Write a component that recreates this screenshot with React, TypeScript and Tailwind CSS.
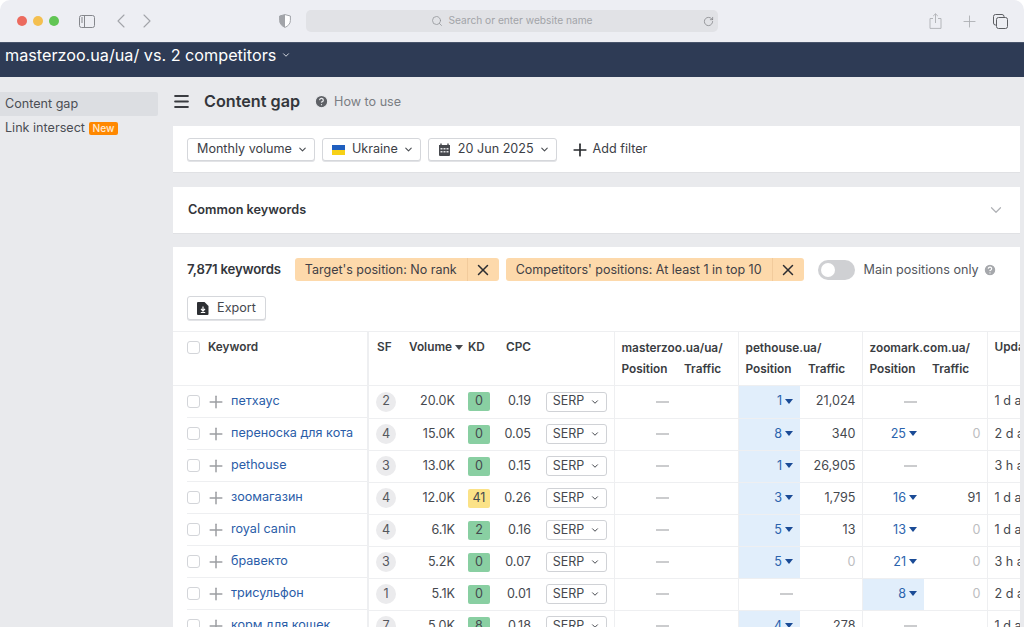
import React from 'react';
import { ChevronDown, ChevronLeft, ChevronRight, Plus, X, Search, RotateCw, Menu, CircleHelp } from 'lucide-react';

type Pos = { v: string; hi?: boolean } | null;
type Row = {
  kw: string; sf: number; vol: string; kd: number; cpc: string;
  p1: Pos; t1: string; p2: Pos; t2: string; upd: string;
};

const rows: Row[] = [
  { kw: 'петхаус', sf: 2, vol: '20.0K', kd: 0, cpc: '0.19', p1: { v: '1', hi: true }, t1: '21,024', p2: null, t2: '', upd: '1 d ago' },
  { kw: 'переноска для кота', sf: 4, vol: '15.0K', kd: 0, cpc: '0.05', p1: { v: '8', hi: true }, t1: '340', p2: { v: '25' }, t2: '0', upd: '2 d ago' },
  { kw: 'pethouse', sf: 3, vol: '13.0K', kd: 0, cpc: '0.15', p1: { v: '1', hi: true }, t1: '26,905', p2: null, t2: '', upd: '3 h ago' },
  { kw: 'зоомагазин', sf: 4, vol: '12.0K', kd: 41, cpc: '0.26', p1: { v: '3', hi: true }, t1: '1,795', p2: { v: '16' }, t2: '91', upd: '1 d ago' },
  { kw: 'royal canin', sf: 4, vol: '6.1K', kd: 2, cpc: '0.16', p1: { v: '5', hi: true }, t1: '13', p2: { v: '13' }, t2: '0', upd: '1 d ago' },
  { kw: 'бравекто', sf: 3, vol: '5.2K', kd: 0, cpc: '0.07', p1: { v: '5', hi: true }, t1: '0', p2: { v: '21' }, t2: '0', upd: '3 h ago' },
  { kw: 'трисульфон', sf: 1, vol: '5.1K', kd: 0, cpc: '0.01', p1: null, t1: '', p2: { v: '8', hi: true }, t2: '0', upd: '2 d ago' },
  { kw: 'корм для кошек', sf: 7, vol: '5.0K', kd: 8, cpc: '0.18', p1: { v: '4', hi: true }, t1: '278', p2: null, t2: '', upd: '1 d ago' },
];

const Caret = () => (
  <svg width="8" height="5" viewBox="0 0 8 5" className="ml-[3px] shrink-0">
    <path d="M0 0h8L4 5z" fill="#1a4b96" />
  </svg>
);

const Dash = () => <span className="inline-block h-[2px] w-[13px] bg-[#cbccce] align-middle" />;

const Checkbox = () => (
  <span className="block h-[13px] w-[13px] shrink-0 rounded-[3px] border border-[#d3d5d9] bg-white" />
);

const FilterButton = ({ children }: { children: React.ReactNode }) => (
  <button className="flex h-[23px] items-center rounded-[3px] border border-[#d5d7db] bg-white pl-[9px] pr-[6px] text-[12.6px] text-[#3c4046] shadow-[0_1px_0_#e2e3e6]">
    {children}
    <ChevronDown size={11} strokeWidth={2.4} className="ml-[5px] text-[#4a4d52]" />
  </button>
);

const Pill = ({ label }: { label: string }) => (
  <div className="flex h-[23px] items-center rounded-[3px] bg-[#fdd9ab] text-[12.5px] text-[#3f4045]">
    <span className="px-[10px] pt-[1px]">{label}</span>
    <span className="flex h-full w-[32px] items-center justify-center border-l border-[#f2cb9c]">
      <X size={18} strokeWidth={2} className="text-[#2c2d31]" />
    </span>
  </div>
);

const PosCell = ({ p }: { p: Pos }) => (
  <td className={`border-b border-[#eeeff1] pr-[7px] text-right ${p?.hi ? 'bg-[#e1eefb]' : ''}`}>
    {p ? (
      <span className="inline-flex items-center text-[#2a63ad]">
        {p.v}
        <Caret />
      </span>
    ) : (
      <Dash />
    )}
  </td>
);

const TrafficCell = ({ t }: { t: string }) => (
  <td className={`border-b border-r border-[#eeeff1] pr-[6px] text-right ${t === '0' ? 'text-[#bcbdc0]' : ''}`}>
    {t}
  </td>
);

const BrowserBar = () => (
  <div className="flex h-[42px] shrink-0 items-center rounded-t-[10px] bg-[#edeef3]">
    <span className="ml-[17px] h-[10px] w-[10px] rounded-full bg-[#ec6a5e]" />
    <span className="ml-[6px] h-[10px] w-[10px] rounded-full bg-[#f4bf4f]" />
    <span className="ml-[6px] h-[10px] w-[10px] rounded-full bg-[#61c554]" />
    <svg width="16" height="13" viewBox="0 0 16 13" className="ml-[20px]" fill="none" stroke="#85878c">
      <rect x="0.5" y="0.5" width="15" height="12" rx="2" />
      <path d="M5.5 0.5v12M2 3h2M2 5h2M2 7h2" />
    </svg>
    <ChevronLeft size={24} strokeWidth={1.1} className="ml-[14px] text-[#a2a4a9]" />
    <ChevronRight size={24} strokeWidth={1.1} className="ml-[2px] text-[#a2a4a9]" />
    <svg width="12" height="14" viewBox="0 0 12 14" className="ml-[120px]">
      <path d="M6 .6 11.4 2v4.5c0 3.3-2.4 5.6-5.4 6.9C3 12.1.6 9.8.6 6.5V2z" fill="#fff" stroke="#a2a4a9" />
      <path d="M6 .6 .6 2v4.5c0 3.3 2.4 5.6 5.4 6.9z" fill="#a2a4a9" />
    </svg>
    <div className="relative ml-[15px] flex h-[22px] w-[412px] items-center justify-center rounded-[5px] bg-[#e1e2e6] text-[10.2px] text-[#a2a4a8]">
      <Search size={12} strokeWidth={1.5} className="mr-[5px] text-[#8f9195]" />
      Search or enter website name
      <RotateCw size={11} strokeWidth={1.5} className="absolute right-[4px] text-[#77797d]" />
    </div>
    <svg width="13" height="16" viewBox="0 0 13 16" className="ml-[211px]" fill="none" stroke="#b4b6ba">
      <path d="M4 5.5H1v9.9h11V5.5H9M6.5 10V.8M4.2 3 6.5.8 8.8 3" />
    </svg>
    <Plus size={19} strokeWidth={1.1} className="ml-[18px] text-[#abadb1]" />
    <svg width="15" height="15" viewBox="0 0 15 15" className="ml-[14px]" fill="none" stroke="#5d5f63">
      <rect x="0.5" y="0.5" width="10.5" height="10.5" rx="2" />
      <rect x="3.5" y="3.5" width="11" height="11" rx="2" fill="#edeef3" />
    </svg>
  </div>
);

const Sidebar = () => (
  <aside className="w-[173px] shrink-0 pr-[15px] pt-[15px] text-[12.6px] text-[#4b4e54]">
    <div className="flex h-[24px] items-center rounded-r-[2px] bg-[#dcdee2] pl-[5px]">Content gap</div>
    <div className="flex h-[24px] items-center pl-[5px]">
      Link intersect
      <span className="ml-[4px] rounded-[2px] bg-[#ff8800] px-[3.5px] text-[10.2px] font-medium leading-[13px] text-[#ffe9d0]">New</span>
    </div>
  </aside>
);

export default function App() {
  return (
    <div className="flex h-[627px] w-[1024px] flex-col overflow-hidden bg-white font-['Inter',sans-serif]">
      <BrowserBar />
      <header className="flex h-[35px] shrink-0 items-start border-t border-[#48546b] bg-[#2e3b55] pl-[5px] text-[16.2px] leading-[24px] text-white">
        masterzoo.ua/ua/ vs. 2 competitors
        <ChevronDown size={10} strokeWidth={2.4} className="ml-[5px] mt-[7px] text-[#d5d8df]" />
      </header>

      <div className="flex min-h-0 flex-1 bg-[#e9eaed]">
        <Sidebar />
        <main className="flex w-[847px] min-w-0 flex-col">
          <div className="flex h-[49px] shrink-0 items-center pb-[1px]">
            <Menu size={19} strokeWidth={2.6} className="-ml-[1.5px] text-[#3a3c41]" />
            <h1 className="ml-[13.5px] text-[16.2px] font-semibold text-[#33363b]">Content gap</h1>
            <CircleHelp size={15} fill="#5e6166" strokeWidth={2} className="ml-[14px] text-[#e9eaed]" />
            <span className="ml-[5px] pt-[3px] text-[12.6px] text-[#7b7e83]">How to use</span>
          </div>

          <section className="flex h-[46px] shrink-0 items-center bg-white pl-[14px] pt-[1px] shadow-[0_1px_0_#e0e1e4]">
            <div className="flex items-center gap-[7px]">
              <FilterButton>Monthly volume</FilterButton>
              <FilterButton>
                <span className="mr-[7px] flex h-[10px] w-[13px] flex-col">
                  <span className="h-1/2 bg-[#1f5fbf]" />
                  <span className="h-1/2 bg-[#f7d117]" />
                </span>
                Ukraine
              </FilterButton>
              <FilterButton>
                <svg width="13" height="13" viewBox="0 0 13 13" className="mr-[7px]">
                  <path d="M1 2h11v10a1 1 0 0 1-1 1H2a1 1 0 0 1-1-1z" fill="#47494e" />
                  <path d="M3 .5v2M10 .5v2" stroke="#47494e" strokeWidth="1.4" />
                  <path d="M2.5 5h2v1.5h-2zM5.5 5h2v1.5h-2zM8.5 5h2v1.5h-2zM2.5 8h2v1.5h-2zM5.5 8h2v1.5h-2zM8.5 8h2v1.5h-2z" fill="#dfe0e2" />
                </svg>
                20 Jun 2025
              </FilterButton>
            </div>
            <Plus size={20} strokeWidth={2} className="ml-[13px] text-[#26282c]" />
            <span className="ml-[3px] text-[12.6px] text-[#3c4046]">Add filter</span>
          </section>

          <section className="mt-[15px] flex h-[46px] shrink-0 items-center justify-between bg-white pl-[15px] pr-[15px] shadow-[0_1px_0_#e0e1e4]">
            <span className="text-[12.7px] font-semibold text-[#33363b]">Common keywords</span>
            <ChevronDown size={18} strokeWidth={1.6} className="text-[#b0b2b6]" />
          </section>

          <section className="mt-[14px] min-h-0 flex-1 overflow-hidden bg-white">
            <div className="flex h-[45px] items-center pl-[14px]">
              <span className="pt-[1px] text-[13.2px] font-semibold tracking-[-0.2px] text-[#33363b]">7,871 keywords</span>
              <div className="ml-[14px] flex items-center gap-[7px]">
                <Pill label="Target's position: No rank" />
                <Pill label="Competitors' positions: At least 1 in top 10" />
              </div>
              <span className="ml-[14px] flex h-[20px] w-[37px] items-center rounded-full bg-[#cfd0d3] pl-[3px]">
                <span className="h-[14px] w-[14px] rounded-full bg-white" />
              </span>
              <span className="ml-[9px] pt-[1px] text-[12.6px] text-[#53565c]">Main positions only</span>
              <CircleHelp size={14} fill="#a6a8ac" strokeWidth={2} className="ml-[4px] text-white" />
            </div>

            <div className="pl-[14px] pt-[4px]">
              <button className="flex h-[24px] w-[79px] items-center justify-center rounded-[3px] border border-[#d5d7db] bg-white text-[12.6px] text-[#45484e] shadow-[0_1px_0_#e2e3e6]">
                <svg width="12" height="13" viewBox="0 0 12 13" className="mr-[8px]">
                  <path d="M1 0h6.5L11.5 4v8a1 1 0 0 1-1 1H1a1 1 0 0 1-1-1V1a1 1 0 0 1 1-1z" fill="#2d2f33" />
                  <path d="M6 4.5v4M4 6.8 6 9l2-2.2M3.8 10.5h4.4" stroke="#fff" strokeWidth="1.2" fill="none" />
                </svg>
                Export
              </button>
            </div>

            <table className="mt-[11px] w-[895px] table-fixed border-collapse border-t border-[#eeeff1] text-[12.6px] text-[#45484e]">
              <colgroup>
                <col className="w-[195px]" />
                <col className="w-[28px]" />
                <col className="w-[59px]" />
                <col className="w-[48px]" />
                <col className="w-[28px]" />
                <col className="w-[83px]" />
                <col className="w-[62px]" />
                <col className="w-[62px]" />
                <col className="w-[62px]" />
                <col className="w-[62px]" />
                <col className="w-[62px]" />
                <col className="w-[63px]" />
                <col className="w-[81px]" />
              </colgroup>
              <thead className="text-[11.8px] font-semibold text-[#3a3d42]">
                <tr className="h-[27px]">
                  <th rowSpan={2} className="border-b border-r-2 border-[#eeeff1] pb-[22px] pl-[14px] text-left font-semibold">
                    <span className="flex items-center gap-[8px]">
                      <Checkbox />
                      Keyword
                    </span>
                  </th>
                  <th rowSpan={2} className="border-b border-[#eeeff1] pb-[22px] pl-[8px] text-left font-semibold">SF</th>
                  <th rowSpan={2} className="border-b border-[#eeeff1] pb-[22px] text-right font-semibold">
                    <span className="-mr-[8px] inline-flex items-center">
                      Volume
                      <svg width="8" height="5" viewBox="0 0 8 5" className="ml-[3px]"><path d="M0 0h8L4 5z" fill="#45484e" /></svg>
                    </span>
                  </th>
                  <th rowSpan={2} className="border-b border-[#eeeff1] pb-[22px] pl-[13px] text-left font-semibold">KD</th>
                  <th rowSpan={2} className="border-b border-[#eeeff1] pb-[22px] text-right font-semibold">CPC</th>
                  <th rowSpan={2} className="border-b border-r border-[#eeeff1]" />
                  <th colSpan={2} className="border-r border-[#eeeff1] pl-[7px] pt-[7px] text-left font-semibold">masterzoo.ua/ua/</th>
                  <th colSpan={2} className="border-r border-[#eeeff1] pl-[7px] pt-[7px] text-left font-semibold">pethouse.ua/</th>
                  <th colSpan={2} className="border-r border-[#eeeff1] pl-[7px] pt-[7px] text-left font-semibold">zoomark.com.ua/</th>
                  <th rowSpan={2} className="border-b border-[#eeeff1] pb-[22px] pl-[7px] text-left font-semibold">Updated</th>
                </tr>
                <tr className="h-[27px]">
                  <th className="border-b border-[#eeeff1] pb-[3px] pl-[7px] text-left font-semibold">Position</th>
                  <th className="border-b border-r border-[#eeeff1] pb-[3px] pl-[8px] text-left font-semibold">Traffic</th>
                  <th className="border-b border-[#eeeff1] pb-[3px] pl-[7px] text-left font-semibold">Position</th>
                  <th className="border-b border-r border-[#eeeff1] pb-[3px] pl-[8px] text-left font-semibold">Traffic</th>
                  <th className="border-b border-[#eeeff1] pb-[3px] pl-[7px] text-left font-semibold">Position</th>
                  <th className="border-b border-r border-[#eeeff1] pb-[3px] pl-[8px] text-left font-semibold">Traffic</th>
                </tr>
              </thead>
              <tbody>
                {rows.map(r => (
                  <tr key={r.kw} className="h-[32px]">
                    <td className="border-r-2 border-r-[#eeeff1] pl-[14px]">
                      <div className="flex h-[32px] items-center border-b border-[#eeeff1]">
                        <Checkbox />
                        <Plus size={20} strokeWidth={1.8} className="ml-[6px] text-[#9c9ea2]" />
                        <span className="ml-[5px] text-[#2a5da8]">{r.kw}</span>
                      </div>
                    </td>
                    <td className="border-b border-[#eeeff1] pl-[7px]">
                      <span className="flex h-[20px] w-[20px] items-center justify-center rounded-full bg-[#ebebed] text-[#55585d]">{r.sf}</span>
                    </td>
                    <td className="border-b border-[#eeeff1] text-right">{r.vol}</td>
                    <td className="border-b border-[#eeeff1] pl-[13px]">
                      <span className={`flex h-[19px] w-[22px] items-center justify-center rounded-[2px] ${r.kd === 41 ? 'bg-[#fbe287]' : 'bg-[#89cfa2]'}`}>{r.kd}</span>
                    </td>
                    <td className="border-b border-[#eeeff1] text-right">{r.cpc}</td>
                    <td className="border-b border-r border-[#eeeff1] pl-[15px]">
                      <button className="flex h-[20px] w-[61px] items-center justify-center rounded-[3px] border border-[#d0d2d6] bg-white text-[12.5px] text-[#45484e]">
                        SERP
                        <ChevronDown size={10} strokeWidth={2.4} className="ml-[6px]" />
                      </button>
                    </td>
                    <td className="border-b border-[#eeeff1] pr-[7px] text-right"><Dash /></td>
                    <td className="border-b border-r border-[#eeeff1]" />
                    <PosCell p={r.p1} />
                    <TrafficCell t={r.t1} />
                    <PosCell p={r.p2} />
                    <TrafficCell t={r.t2} />
                    <td className="whitespace-nowrap border-b border-[#eeeff1] pl-[7px]">{r.upd}</td>
                  </tr>
                ))}
              </tbody>
            </table>
          </section>
        </main>
        <span className="min-w-0 flex-1" />
      </div>
    </div>
  );
}
